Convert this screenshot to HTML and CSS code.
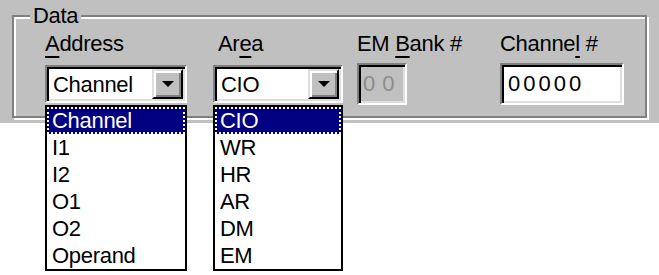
FILE: index.html
```html
<!DOCTYPE html>
<html>
<head>
<meta charset="utf-8">
<link rel="stylesheet" href="styles.css">
</head>
<body>
<div class="page">
<div class="panel">
  <div class="group">
    <span class="legend">Data</span>
    <div class="col c1">
      <div class="label"><u>A</u>ddress</div>
      <div class="combo-wrap w-addr">
        <div class="combo"><span class="value">Channel</span><span class="btn"><span class="arrow"></span></span></div>
        <ul class="list">
          <li class="sel">Channel</li>
          <li>I1</li>
          <li>I2</li>
          <li>O1</li>
          <li>O2</li>
          <li>Operand</li>
        </ul>
      </div>
    </div>
    <div class="col c2">
      <div class="label shift">Ar<u>e</u>a</div>
      <div class="combo-wrap w-area">
        <div class="combo"><span class="value">CIO</span><span class="btn"><span class="arrow"></span></span></div>
        <ul class="list">
          <li class="sel">CIO</li>
          <li>WR</li>
          <li>HR</li>
          <li>AR</li>
          <li>DM</li>
          <li>EM</li>
        </ul>
      </div>
    </div>
    <div class="col c3">
      <div class="label">EM <u>B</u>ank #</div>
      <div class="edit edit-em">00</div>
    </div>
    <div class="col c4">
      <div class="label">Channe<u>l</u> #</div>
      <div class="edit edit-ch">00000</div>
    </div>
  </div>
</div>
</div>
</body>
</html>
```
FILE: styles.css
```css
html, body {
  margin: 0;
  background: #fff;
}
body {
  font-family: "Liberation Sans", Arial, sans-serif;
  font-size: 22px;
  letter-spacing: -0.3px;
  color: #000;
}
.page {
  height: 275px;
  overflow: hidden;
}
.panel {
  background: #c0c0c0;
  height: 123px;
  box-sizing: border-box;
  padding: 15px 0 0 12px;
}
.group {
  position: relative;
  box-sizing: border-box;
  width: 635px;
  height: 103px;
  border: 2px solid #808080;
  box-shadow: inset 2px 2px 0 #fff, 2px 2px 0 #fff;
  display: flex;
  padding: 15px 0 0 31px;
}
.legend {
  position: absolute;
  left: 16px;
  top: -13px;
  padding: 0 3px;
  background: #c0c0c0;
  line-height: 24px;
}
.col {
  display: flex;
  flex-direction: column;
  gap: 7px;
}
.c1 { width: 168px; }
.c2 { width: 144px; }
.c3 { width: 143px; }
.label {
  line-height: 24px;
  white-space: nowrap;
}
.shift { margin-left: 5px; }
u {
  text-decoration-thickness: 2px;
  text-underline-offset: 5px;
}
.combo-wrap {
  position: relative;
  margin-top: 2px;
}
.w-addr { width: 142px; }
.w-area { width: 130px; }
.combo {
  box-sizing: border-box;
  height: 38px;
  display: flex;
  background: #fff;
  border: 2px solid;
  border-color: #808080 #fff #fff #808080;
  box-shadow: inset 2px 2px 0 #000, inset -2px -2px 0 #dfdfdf;
  padding: 2px;
}
.value {
  flex: 1;
  padding: 2px 0 0 4px;
  line-height: 28px;
  white-space: nowrap;
}
.btn {
  width: 31px;
  box-sizing: border-box;
  background: #c0c0c0;
  border: 2px solid;
  border-color: #dfdfdf #000 #000 #dfdfdf;
  box-shadow: inset 2px 2px 0 #fff, inset -2px -2px 0 #808080;
  display: flex;
  align-items: center;
  justify-content: center;
}
.arrow {
  width: 0;
  height: 0;
  border-left: 6px solid transparent;
  border-right: 6px solid transparent;
  border-top: 6px solid #000;
}
.list {
  position: absolute;
  z-index: 5;
  left: 0;
  right: 0;
  top: calc(100% + 2px);
  margin: 0;
  padding: 0;
  list-style: none;
  background: #fff;
  border: 2px solid #000;
  box-sizing: border-box;
}
.list li {
  height: 27px;
  line-height: 27px;
  padding-left: 5px;
  white-space: nowrap;
  box-sizing: border-box;
}
.list li.sel {
  background: #000080;
  color: #fff;
  border: 2px dotted #fff;
  padding-left: 3px;
  line-height: 23px;
}
.edit {
  box-sizing: border-box;
  height: 42px;
  border: 2px solid;
  border-color: #808080 #fff #fff #808080;
  box-shadow: inset 2px 2px 0 #000, inset -2px -2px 0 #dfdfdf;
  background: #fff;
  padding: 2px 0 0 6px;
  line-height: 34px;
  letter-spacing: 3px;
}
.edit-ch { width: 124px; }
.edit-em {
  width: 50px;
  background: #c0c0c0;
  color: #8c8c8c;
  letter-spacing: 7px;
  padding-left: 4px;
}
```
